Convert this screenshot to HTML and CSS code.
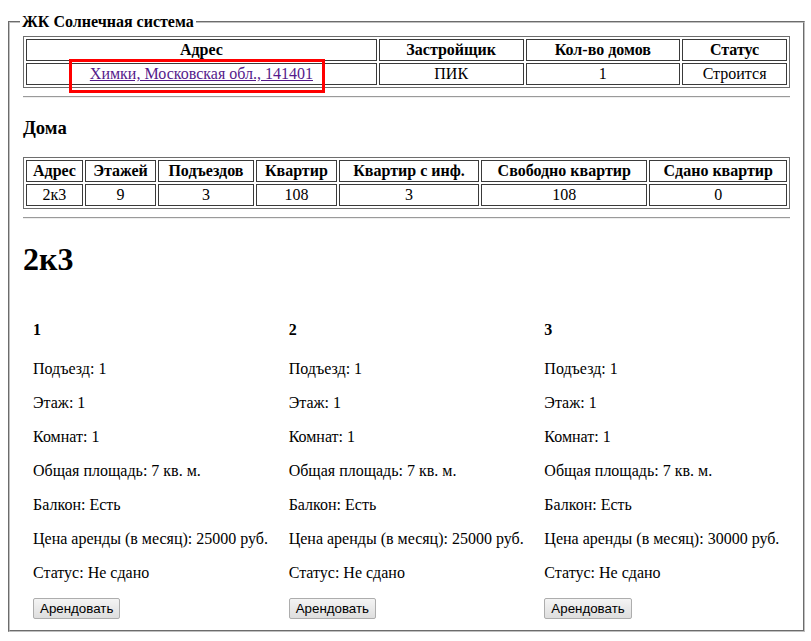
FILE: index.html
```html
<!DOCTYPE html>
<html lang="ru">
<head>
<meta charset="utf-8">
<title>ЖК Солнечная система</title>
<link rel="stylesheet" href="styles.css">
</head>
<body>
<fieldset class="complex">
  <legend class="complex-title">ЖК Солнечная система</legend>
  <table class="grid">
    <tr>
      <th>Адрес</th>
      <th>Застройщик</th>
      <th>Кол-во домов</th>
      <th>Статус</th>
    </tr>
    <tr>
      <td class="addr"><a href="#" class="addr-link">Химки, Московская обл., 141401</a><span class="highlight"></span></td>
      <td>ПИК</td>
      <td>1</td>
      <td>Строится</td>
    </tr>
  </table>
  <hr class="sep">
  <h3 class="section-title">Дома</h3>
  <table class="grid">
    <tr>
      <th>Адрес</th>
      <th>Этажей</th>
      <th>Подъездов</th>
      <th>Квартир</th>
      <th>Квартир с инф.</th>
      <th>Свободно квартир</th>
      <th>Сдано квартир</th>
    </tr>
    <tr>
      <td>2к3</td>
      <td>9</td>
      <td>3</td>
      <td>108</td>
      <td>3</td>
      <td>108</td>
      <td>0</td>
    </tr>
  </table>
  <hr class="sep">
  <h1 class="house-title">2к3</h1>
  <div class="flats">
    <div class="flat">
      <h4 class="flat-num">1</h4>
      <p>Подъезд: 1</p>
      <p>Этаж: 1</p>
      <p>Комнат: 1</p>
      <p>Общая площадь: 7 кв. м.</p>
      <p>Балкон: Есть</p>
      <p>Цена аренды (в месяц): 25000 руб.</p>
      <p>Статус: Не сдано</p>
      <button class="rent-btn" type="button">Арендовать</button>
    </div>
    <div class="flat">
      <h4 class="flat-num">2</h4>
      <p>Подъезд: 1</p>
      <p>Этаж: 1</p>
      <p>Комнат: 1</p>
      <p>Общая площадь: 7 кв. м.</p>
      <p>Балкон: Есть</p>
      <p>Цена аренды (в месяц): 25000 руб.</p>
      <p>Статус: Не сдано</p>
      <button class="rent-btn" type="button">Арендовать</button>
    </div>
    <div class="flat">
      <h4 class="flat-num">3</h4>
      <p>Подъезд: 1</p>
      <p>Этаж: 1</p>
      <p>Комнат: 1</p>
      <p>Общая площадь: 7 кв. м.</p>
      <p>Балкон: Есть</p>
      <p>Цена аренды (в месяц): 30000 руб.</p>
      <p>Статус: Не сдано</p>
      <button class="rent-btn" type="button">Арендовать</button>
    </div>
  </div>
</fieldset>
</body>
</html>
```

FILE: styles.css
```css
html, body {
  background: #fff;
}
body {
  margin: 13px 6px 0 8px;
  font-family: "Liberation Serif", "Times New Roman", serif;
  font-size: 16px;
  color: #000;
}
.complex {
  margin: 0;
  padding: 5px 13px 11px 13px;
  border: 2px groove #c0c0c0;
  box-shadow: 2px 2px 2px rgba(0, 0, 0, 0.28);
}
.complex-title {
  font-weight: bold;
  padding: 0 2px;
  margin-left: -3px;
}
.grid {
  width: 100%;
  border: 1px solid #6e6e6e;
  border-spacing: 2px;
}
.grid th,
.grid td {
  border: 1px solid #3a3a3a;
  padding: 1px;
  text-align: center;
}
.addr {
  position: relative;
}
.addr-link {
  color: #551a8b;
  text-decoration: underline;
}
.highlight {
  position: absolute;
  left: 42px;
  top: -5px;
  width: 250px;
  height: 28px;
  border: 3px solid #ff0000;
  pointer-events: none;
}
.sep {
  margin: 8px 0;
  border: 0;
  border-top: 1px solid #9a9a9a;
  border-bottom: 1px solid #eeeeee;
  height: 0;
}
.section-title {
  font-size: 18.72px;
  margin: 18.72px 0;
}
.house-title {
  font-size: 32px;
  margin: 21.44px 0;
}
.flats {
  display: flex;
}
.flat {
  flex: 1 1 0;
  padding: 0 10px;
}
.flat-num {
  font-size: 16px;
  margin: 21.28px 0;
}
.flat p {
  margin: 16px 0;
}
.rent-btn {
  font-family: "Liberation Sans", Arial, sans-serif;
  font-size: 13.33px;
  color: #000;
  padding: 2px 6px;
  border: 1px solid #adadad;
  border-radius: 2px;
  background: linear-gradient(#f4f4f4, #dedede);
}
```
